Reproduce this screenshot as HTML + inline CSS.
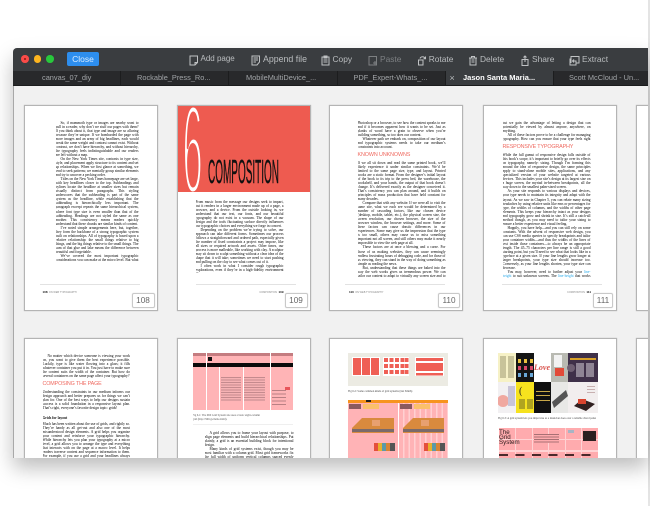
<!DOCTYPE html>
<html style="width:650px;height:506px;overflow:hidden"><head><meta charset="utf-8"><title>PDF Expert</title>
<style>
html,body{margin:0;padding:0;background:#fff}
body{width:650px;height:506px;overflow:hidden;position:relative;font-family:"Liberation Sans",sans-serif}
.strip{position:absolute;left:648px;top:0;width:2px;height:506px;background:linear-gradient(#e4e4e4,#d6d6d6 85%,#e6e6e6)}
.win{position:absolute;left:13px;top:48px;width:635px;height:410px;overflow:hidden;border-radius:4px 0 0 0;background:#f1f1f1;box-shadow:0 10px 20px rgba(0,0,0,.26)}
.win>*{position:absolute}
.tb{left:0;top:0;width:635px;height:23px;background:#3a3d40}
.tabs{left:0;top:23px;width:635px;height:15px;background:#28292b}
.line{left:0;top:37px;width:635px;height:1px;background:#1b1c1d}
.edge{left:0;top:38px;width:1px;height:372px;background:#a8a8a8}
.dot{width:7.5px;height:7.5px;border-radius:50%;top:7.2px}
.close{left:54px;top:4px;width:32px;height:14px;background:#2d8eee;border-radius:2px;color:#d8ecff;font-size:8.5px;line-height:14px;text-align:center}
.t{top:0;height:23px;line-height:22px;font-size:8.4px;color:#babdbf;white-space:nowrap;filter:blur(.25px)}
.ic{top:6.5px;width:10px;height:11px;filter:blur(.2px)}
.ic *{fill:none;stroke:#c0c2c4;stroke-width:1}
.tab{top:23px;height:15px;line-height:14px;font-size:7.4px;color:#a2a5a8;white-space:nowrap;filter:blur(.25px)}
.div{top:23px;height:15px;width:1px;background:#1c1d1e}
.pg{position:absolute;width:132px;height:204px;background:#fff;border:1px solid #b4b4b4;box-shadow:0 0 1px rgba(0,0,0,.25);overflow:hidden}
.in{position:absolute;left:0;top:0;width:132px;height:204px;filter:blur(.3px)}
.tx{position:absolute;font-family:"Liberation Serif",serif;font-size:3.6px;line-height:4.05px;color:#000;text-align:justify;overflow:hidden}
.tx p{margin:0;text-indent:5px}
.h{position:absolute;font-size:5.4px;line-height:6px;color:#ef6a60;white-space:nowrap}
.rule{position:absolute;height:1px;background:#e2e2e2}
.foot{position:absolute;top:185px;font-size:2.5px;line-height:3px;color:#888;white-space:nowrap}
.foot b{color:#111;font-size:3px}
.badge{position:absolute;top:187px;height:13px;line-height:13px;border:1px solid #c9c9c9;border-radius:2px;background:#fff;color:#666;font-size:8.2px;text-align:center;box-shadow:0 0 1px rgba(0,0,0,.2)}
.b{position:absolute}
</style></head><body>
<div class="strip"></div>
<div class="win">
<div class="tb"></div>
<div class="dot" style="left:8.2px;background:#fb4b48"></div>
<div style="left:10.9px;top:9.9px;width:2px;height:2px;border-radius:50%;background:#8c1512"></div>
<div class="dot" style="left:20.7px;background:#fdb51f"></div>
<div class="dot" style="left:33.2px;background:#28c83c"></div>
<div class="close">Close</div>

<svg class="ic" style="left:176px" viewBox="0 0 10 11"><path d="M1 1h7.5v6.5L6 10H1zM6 10V7.5h2.500"/></svg>
<div class="t" style="left:187.500px;font-size:8px">Add page</div>
<svg class="ic" style="left:238px" viewBox="0 0 10 11"><path d="M1 1h7.5v6L6 10H1zM2.500 3h4.500M2.500 5h4.500M2.500 7h2.500"/></svg>
<div class="t" style="left:250px;font-size:8.800px">Append file</div>
<svg class="ic" style="left:307px" viewBox="0 0 10 11"><path d="M2 2h7v8H2zM4 1h3v2H4zM3.500 5h4M3.500 7h4"/></svg>
<div class="t" style="left:319.500px">Copy</div>
<svg class="ic" style="left:355px;opacity:.5" viewBox="0 0 10 11"><path d="M1 1.500h7.500v8.500H1zM5 8h3.500M7 6v4"/></svg>
<div class="t" style="left:367px;color:#7d8083">Paste</div>
<svg class="ic" style="left:404px" viewBox="0 0 10 11"><path d="M1.500 5h4.500v5H1.500zM3 3.500C3.500 1.500 7 1 8 3.500M8.500 1.500v2.300H6.500"/></svg>
<div class="t" style="left:415.700px">Rotate</div>
<svg class="ic" style="left:455px" viewBox="0 0 10 11"><path d="M1 3h8M3.500 3V1.500h3V3M2 3v7h6V3M3.500 5h3M3.500 7h3"/></svg>
<div class="t" style="left:467px">Delete</div>
<svg class="ic" style="left:507px" viewBox="0 0 10 11"><path d="M2 4.500h6V10.500H2zM5 7V1M3.500 2.500L5 1l1.500 1.500"/></svg>
<div class="t" style="left:519px">Share</div>
<svg class="ic" style="left:556px;width:11px" viewBox="0 0 11 11"><path d="M2 8V1.500h8V8H7M1 3.500V10h6V6H3.500M5 4.500L3.500 6 5 7.500"/></svg>
<div class="t" style="left:569px">Extract</div>

<div class="tabs"></div>
<div style="left:432px;top:23px;width:108px;height:14px;background:#3a3d40"></div>
<div class="div" style="left:107px"></div>
<div class="div" style="left:215px"></div>
<div class="div" style="left:324px"></div>
<div class="div" style="left:432px"></div>
<div class="div" style="left:540px"></div>
<div class="tab" style="left:29px">canvas_07_diy</div>
<div class="tab" style="left:124px">Rockable_Press_Ro...</div>
<div class="tab" style="left:233px">MobileMultiDevice_...</div>
<div class="tab" style="left:340.500px">PDF_Expert-Whats_...</div>
<div class="tab" style="left:436.500px;color:#b5b8ba;font-size:9px">×</div>
<div class="tab" style="left:450px;color:#fff;font-weight:bold;font-size:7.500px">Jason Santa Maria...</div>
<div class="tab" style="left:556px;width:75px;overflow:hidden">Scott McCloud - Un...</div>
<div class="line"></div>
<div class="edge"></div>

<!-- Row 1 -->
<div class="pg" style="left:10.500px;top:56.500px"><div class="in">
<div class="tx" style="left:31px;top:15px;width:83px;height:140px">
<p>So, if mammoth type or images are nearby wont to pull in a reader, why don’t we stuff our pages with them? If you think about it, that type and image are so alluring because they’re unique. If we bombarded the page with more images and an army of big headlines, each would break the same weight and contrast cannot exist. Without contrast, we don’t have hierarchy, and without hierarchy, the typography feels indistinguishable and our readers are left without a map.</p>
<p>On the New York Times site, contrasts in type size, style, and placement apply structure to its content and set up relationships. When we first glance at something, we tend to seek patterns; we mentally group similar elements and try to uncover a pecking order.</p>
<p>Titles on the New York Times homepage are set large, with key headlines closer to the top. Subheadings and bylines locate the headline at smaller sizes but remain visually distinct from paragraphs. This styling underscores that the subheading is part of the same system as the headline, while establishing that the subheading is hierarchically less important. The paragraph excerpt repeats the same hierarchical system, where font type size is even smaller than that of the subheading. Headings are not styled the same as one another. This consistency means readers quickly understand that these chunks are similar kinds of content.</p>
<p>I’ve noted simple arrangements here, but, together, they form the backbone of a strong typographic system built on relationships. All of typography is based upon a relative relationship: the small things relative to big things, and the big things relative to the small things. The sum of that glue and lake means the difference between beautiful and forgettable.</p>
<p>We’ve covered the most important typographic considerations you can make at the micro level. But what about the other end of the spectrum: the page? How do larger elements, like the browser window or grid systems, affect our lovingly crafted paragraphs and headlines? Let’s look at the big picture.</p>
</div>
<div class="rule" style="left:15px;top:178px;width:100px"></div>
<div class="foot" style="left:18px"><b>108</b>&nbsp; ON WEB TYPOGRAPHY</div>
<div class="badge" style="right:2px;width:21px">108</div>
</div></div>

<div class="pg" style="left:163.500px;top:56.500px"><div class="in">
<svg class="b" style="left:0;top:0" width="132" height="86" viewBox="0 0 132 86">
<rect width="132" height="86" fill="#ee5b50"/>
<text x="0" y="0" transform="translate(4.500,87) scale(.29,1)" font-family="Liberation Sans" font-size="125" fill="#fff" stroke="#ee5b50" stroke-width="5">6</text>
<text x="30" y="77" font-family="Liberation Sans" font-size="33" fill="#111" stroke="#111" stroke-width=".4" textLength="71" lengthAdjust="spacingAndGlyphs">COMPOSITION</text>
</svg>
<div class="tx" style="left:18px;top:94px;width:88px;height:73px">
<p style="text-indent:0">From music from the message our designs seek to impart, but it renders in a larger environment made up of a page, a browser, and a device. From the outside looking in, we understand that our text, our fonts, and our beautiful typography do not exist in a vacuum. The shape of our design and the tools fluctuating surface directly influences our typographic choices and everything we forge in concert.</p>
<p>Depending on the problem we’re trying to solve, our approach can take different forms. Sometimes our process follows a straightforward and ordered path, especially given the number of fixed constraints a project may impose, like all sizes or required artwork and assets. Other times, our process is more malleable, like working with clay. A sculptor may sit down to sculpt something without a clear idea of the shape that it will take; sometimes we need to start pushing and pulling on the clay to see what comes out of it.</p>
<p>I often work in what I consider rough typographic explorations, even if they’re in a high-fidelity environment like</p>
</div>
<div class="rule" style="left:18px;top:178px;width:100px"></div>
<div class="foot" style="right:26px">COMPOSITION &nbsp;<b>109</b></div>
<div class="badge" style="right:2px;width:21px">109</div>
</div></div>

<div class="pg" style="left:316px;top:56.500px"><div class="in">
<div class="tx" style="left:27.500px;top:15px;width:88px;height:28px">
<p style="text-indent:0">Photoshop or a browser, to see how the content speaks to me and if it becomes apparent how it wants to be set. Just as planks of wood have a grain to observe when you’re building something, so too does our content.</p>
<p>Whatever path we embark on, composition of our layout and typographic systems needs to take our medium’s constraints into account.</p>
</div>
<div class="h" style="left:27.500px;top:46px;letter-spacing:-.1px">KNOWN UNKNOWNS</div>
<div class="tx" style="left:27.500px;top:55px;width:88px;height:117px">
<p style="text-indent:0">If we all sit down and read the same printed book, we’ll likely experience it under similar constraints. We’d be limited to the same page size, type, and layout. Printed books are a static format. From the designer’s initial layout of the book to its trip to the press bed, the warehouse, the bookshelf, and your hands, the output of that book doesn’t change. It’s delivered exactly as the designer conceived it. That’s consistency you can plan around, and it builds on principles of mass production that have held constant for many decades.</p>
<p>Compare that with any website. If we were all to visit the same site, what we each see would be determined by a number of cascading factors, like our chosen device (desktop, mobile, tablet, etc.), the physical screen size, the screen resolution, our chosen browser, the size of the browser window, the browser settings, and more. Some of these factors can cause drastic differences in our experiences. Some may give us the impression that the type is too small, others may cause us to miss something important not all screen, and still others may make it nearly impossible to view the web page at all.</p>
<p>These factors are at once a blessing and a curse. For those of us making websites, they can cause seemingly endless frustrating hours of debugging code, and for those of us viewing, they can stand in the way of doing something as simple as reading the news.</p>
<p>But, understanding that these things are baked into the way the web works gives us tremendous power. We can tailor our content to adapt to virtually any screen size and to look pretty good while doing so. Sure, it’s more difficult to achieve the set precision you get with designing for a physical book I might use,</p>
</div>
<div class="rule" style="left:15px;top:178px;width:100px"></div>
<div class="foot" style="left:19px"><b>110</b>&nbsp; ON WEB TYPOGRAPHY</div>
<div class="badge" style="right:2px;width:20px">110</div>
</div></div>

<div class="pg" style="left:470px;top:56.500px"><div class="in">
<div class="tx" style="left:18.500px;top:15px;width:88px;height:20px">
<p style="text-indent:0">but we gain the advantage of letting a design that can potentially be viewed by almost anyone, anywhere, on anything.</p>
<p>All of these factors prove to be a challenge for managing typography. How can you ensure that your type feels right on any screen?</p>
</div>
<div class="h" style="left:18.500px;top:38.500px;letter-spacing:-.15px">RESPONSIVE TYPOGRAPHY</div>
<div class="tx" style="left:18.500px;top:47.500px;width:88px;height:125px">
<p style="text-indent:0">While the full gamut of responsive design falls outside of this book’s scope, it’s important to briefly go over its effects on typography, namely: sizing. Though I’m framing this around the idea of responsive design, the same principles apply to stand-alone mobile sites, applications, and any specialized version of your website targeted at various devices. This includes your site’s design at its largest size on a huge screen, the myriad in-between breakpoints, all the way down to the smallest palm-sized screen.</p>
<p>As your site responds to various displays and devices, your type needs to maintain its integrity and adapt with the layout. As we saw in Chapter 5, you can relate many sizing headaches by using relative units like ems or percentages for type, the widths of columns, and the widths of other page elements. This keeps your hierarchy intact as your designs and typography grow and shrink in size. It’s still a catch-all method though, as you may need to tailor your sizing to ensure a better experience and visual feeling.</p>
<p>Happily, you have help—and you can still rely on some constants. With the advent of responsive web design, you can use CSS media queries to specify breakpoints and tailor your container widths—and thus the widths of the lines of text inside those containers—to always be an appropriate length. The 45–75 characters per line range is still a good starting point, but you’ll need to see what that looks like in a typeface at a given size. If your line lengths grow longer at larger breakpoints, your type size should increase too. Conversely, as your line lengths shorten, your type size can decrease.</p>
<p>You may, however, need to further adjust your <span style="color:#2aa9e8">line-height</span> to suit unknown screens. The <span style="color:#2aa9e8">line-height</span> that works for body at a display size for your listing may appear too large on a</p>
</div>
<div class="rule" style="left:18px;top:178px;width:100px"></div>
<div class="foot" style="right:25px">COMPOSITION &nbsp;<b>111</b></div>
<div class="badge" style="right:3px;width:18px">111</div>
</div></div>

<div class="pg" style="left:623px;top:56.500px;width:12px;border-right:0"></div>

<!-- Row 2 -->
<div class="pg" style="left:10.500px;top:290px;height:130px"><div class="in" style="height:130px">
<div class="tx" style="left:18px;top:15px;width:87.500px;height:24px">
<p>No matter which device someone is viewing your work on, you want to give them the best experience possible. Luckily, type is like water flowing into a glass; it fills whatever container you put it in. You just have to make sure the content suits the width of the container. But how do several containers on the same page affect your typography?</p>
</div>
<div class="h" style="left:18px;top:41.500px;letter-spacing:-.15px">COMPOSING THE PAGE</div>
<div class="tx" style="left:18px;top:51px;width:87.500px;height:20px">
<p style="text-indent:0">Understanding the constraints in our medium informs our design approach and better prepares us for things we can’t plan for. One of the best ways to help our designs sustain success is a solid foundation in a responsive layout plan. That’s right, everyone’s favorite design topic: grids!</p>
</div>
<div class="tx" style="left:18px;top:77px;width:87.500px;height:5px;font-weight:bold;color:#111">Grids for layout</div>
<div class="tx" style="left:18px;top:83px;width:87.500px;height:40px">
<p style="text-indent:0">Much has been written about the use of grids, and rightly so. They’re handy as all get-out and also one of the most misunderstood design elements. A grid helps you organize your content and reinforce your typographic hierarchy. While hierarchy lets you plan your typography at a micro level, a grid allows you to arrange the type and everything that interacts with on the page at a macro level. It helps readers traverse content and sequence information to them. For example, if you use a grid and your headlines always appear in a certain spot on your images</p>
</div>
</div></div>

<div class="pg" style="left:163.500px;top:290px;height:130px"><div class="in" style="height:130px">
<div class="b" style="left:15px;top:14px;width:100px;height:57px;background:#ffb4b6"></div>
<div class="b" style="left:15px;top:14px;width:100px;height:3px;background:#c47c80"></div>
<div class="b" style="left:15px;top:24px;width:100px;height:4px;background:#0b0b0b"></div>
<div class="b" style="left:28px;top:14px;width:1px;height:57px;background:#fff"></div>
<div class="b" style="left:41px;top:28px;width:1px;height:43px;background:#fff"></div>
<div class="b" style="left:65px;top:28px;width:1px;height:43px;background:#fff"></div>
<div class="b" style="left:92px;top:14px;width:1px;height:57px;background:#fff"></div>
<div class="b" style="left:43px;top:38px;width:20px;height:24px;background:repeating-linear-gradient(#c58a8e 0 1px,#f6b2b4 1px 2.500px)"></div>
<div class="b" style="left:66px;top:38px;width:21px;height:24px;background:repeating-linear-gradient(#c58a8e 0 1px,#f6b2b4 1px 2.500px)"></div>
<div class="b" style="left:94px;top:51px;width:14px;height:17px;background:repeating-linear-gradient(#b98084 0 1px,#ffb4b6 1px 3.500px)"></div>
<div class="b" style="left:30px;top:18px;width:4px;height:4px;background:#111"></div>
<div class="b" style="left:107px;top:48px;width:5px;height:3px;background:#e8545a"></div>
<div class="tx" style="left:15px;top:75px;width:70px;height:9px;font-size:2.800px;line-height:3.600px;color:#555;text-align:left">Fig 6.1: The 960 Grid System site uses a basic eight-column grid (http://960.gs/demo.html).</div>
<div class="rule" style="left:15px;top:85px;width:100px;background:#efefef"></div>
<div class="tx" style="left:27px;top:92px;width:89px;height:27px">
<p>A grid allows you to frame your layout with purpose, to align page elements and build hierarchical relationships. Put plainly, a grid is an essential building block for intentional design.</p>
<p>Many kinds of grid systems exist, though you may be most familiar with a column grid. Most grid frameworks fix the full width of uniform vertical columns spaced evenly across a page. But as you can see in FIG 6.1, that is only one type. Modular grids</p>
</div>
</div></div>

<div class="pg" style="left:316px;top:290px;height:130px"><div class="in" style="height:130px">
<div class="b" style="left:18px;top:14px;width:100px;height:33px;background:#ecebe3"></div>
<div class="b" style="left:22px;top:18px;width:28px;height:19px;background:#fff"></div>
<div class="b" style="left:23px;top:19px;width:8px;height:17px;background:#ef5f55"></div>
<div class="b" style="left:32px;top:19px;width:8px;height:17px;background:#ef5f55"></div>
<div class="b" style="left:41px;top:19px;width:8px;height:17px;background:#ef5f55"></div>
<svg class="b" style="left:53px;top:18px" width="26" height="19"><rect width="26" height="19" fill="#fff"/><g fill="#ef5f55"><rect x="1" y="1" width="4" height="4"/><rect x="6.500" y="1" width="4" height="4"/><rect x="12" y="1" width="4" height="4"/><rect x="17.500" y="1" width="4" height="4"/><rect x="22" y="1" width="3.500" height="4"/><rect x="1" y="7" width="4" height="4"/><rect x="6.500" y="7" width="4" height="4"/><rect x="12" y="7" width="4" height="4"/><rect x="17.500" y="7" width="4" height="4"/><rect x="22" y="7" width="3.500" height="4"/><rect x="1" y="13" width="4" height="4"/><rect x="6.500" y="13" width="4" height="4"/><rect x="12" y="13" width="4" height="4"/><rect x="17.500" y="13" width="4" height="4"/><rect x="22" y="13" width="3.500" height="4"/></g></svg>
<svg class="b" style="left:85px;top:18px" width="29" height="19"><rect width="29" height="19" fill="#fff"/><g fill="#ef5f55"><rect x="1" y="1" width="27" height="3"/><rect x="1" y="6" width="27" height="8"/><rect x="1" y="16" width="27" height="2.500"/></g></svg>
<div class="tx" style="left:18px;top:51px;width:80px;height:4px;font-size:2.800px;line-height:3.600px;color:#444;text-align:left;white-space:nowrap">Fig 6.2: Some common kinds of grid systems (Ian Smith)</div>
<div class="b" style="left:18px;top:61px;width:100px;height:3px;background:#f7941e"></div>
<div class="b" style="left:36px;top:61px;width:5px;height:2px;background:#222"></div>
<div class="b" style="left:18px;top:64px;width:49.500px;height:60px;background:#ffb3b6"></div>
<div class="b" style="left:68.500px;top:64px;width:49.500px;height:60px;background:repeating-linear-gradient(90deg,#ffb3b6 0 4px,#ffd0d2 4px 5.500px)"></div>
<div class="b" style="left:19px;top:65px;width:12px;height:5px;background:#8a5a5e"></div>
<div class="b" style="left:33px;top:65px;width:16px;height:5px;background:#fbc06b"></div>
<div class="b" style="left:70px;top:65px;width:12px;height:5px;background:#8a5a5e"></div>
<div class="b" style="left:84px;top:65px;width:16px;height:5px;background:#fbc06b"></div>
<svg class="b" style="left:22px;top:77px" width="92" height="23"><g fill="#d98a3e"><polygon points="0,12 10,2 42,2 42,17 0,17"/><polygon points="51,12 61,2 92,2 92,17 51,17"/></g><g fill="#7a6a6a"><rect x="0" y="13" width="42" height="3"/><rect x="51" y="13" width="41" height="3"/></g><g fill="#e8a070"><rect x="20" y="4" width="8" height="6"/><rect x="69" y="4" width="8" height="6"/></g></svg>
<svg class="b" style="left:44px;top:104px" width="74" height="10"><g><rect x="0" width="4" height="8" fill="#e4503c"/><rect x="4" width="4" height="8" fill="#e8b02c"/><rect x="8" width="4" height="8" fill="#5b9aa8"/><rect x="12" width="4" height="8" fill="#d88434"/><rect x="16" width="5" height="8" fill="#555"/><rect x="50" width="4" height="8" fill="#e4503c"/><rect x="54" width="4" height="8" fill="#e8b02c"/><rect x="58" width="4" height="8" fill="#5b9aa8"/><rect x="62" width="4" height="8" fill="#d88434"/><rect x="66" width="5" height="8" fill="#555"/></g></svg>
</div></div>

<div class="pg" style="left:470px;top:290px;height:130px"><div class="in" style="height:130px">
<div class="b" style="left:14px;top:14px;width:18px;height:29px;background:#f6f1c6"></div>
<div class="b" style="left:32px;top:14px;width:18px;height:29px;background:#151515"></div>
<div class="b" style="left:50px;top:14px;width:17px;height:29px;background:#fff"></div>
<div class="b" style="left:67px;top:14px;width:17px;height:29px;background:#b9bab2"></div>
<div class="b" style="left:84px;top:14px;width:30px;height:29px;background:#3f3049"></div>
<svg class="b" style="left:14px;top:14px" width="100" height="30" font-family="Liberation Serif"><g fill="#c8c39a"><rect x="2" y="3" width="6" height="22"/><rect x="10" y="3" width="6" height="22"/></g><g fill="#e8c040"><rect x="20" y="6" width="3" height="4"/><rect x="26" y="6" width="3" height="4"/><rect x="32" y="6" width="3" height="4"/></g><g fill="#d84a6a"><rect x="20" y="13" width="3" height="4"/><rect x="26" y="13" width="3" height="4"/><rect x="32" y="13" width="3" height="4"/></g><g fill="#6aa8d8"><rect x="20" y="20" width="3" height="4"/><rect x="26" y="20" width="3" height="4"/><rect x="32" y="20" width="3" height="4"/></g><text x="36" y="17" font-size="8" font-style="italic" fill="#d8504a" font-weight="bold">Love</text><rect x="57" y="15" width="9" height="8" fill="#e24a38"/><rect x="56" y="2" width="8" height="12" fill="#f2f2f2"/><rect x="72" y="5" width="26" height="2" fill="#d8a028"/><g fill="#8e8494"><rect x="78" y="10" width="8" height="14"/><rect x="88" y="10" width="8" height="14"/></g><circle cx="73" cy="15" r="4" fill="#6e5f72"/></svg>
<div class="b" style="left:14px;top:43px;width:18px;height:31px;background:#f2f0f2"></div>
<div class="b" style="left:32px;top:43px;width:18px;height:31px;background:#f6e21e"></div>
<div class="b" style="left:50px;top:43px;width:17px;height:31px;background:#101010"></div>
<div class="b" style="left:67px;top:43px;width:17px;height:31px;background:#e8e8e6"></div>
<div class="b" style="left:84px;top:43px;width:30px;height:31px;background:#f2eeee"></div>
<svg class="b" style="left:14px;top:43px" width="100" height="31"><circle cx="5" cy="19" r="6" fill="#f0a8a0"/><rect x="10" y="4" width="7" height="20" fill="#c8c4d8"/><text x="21" y="12" font-size="10" fill="#222" font-family="Liberation Serif">(</text><g fill="#b0a420"><rect x="21" y="17" width="6" height="10"/><rect x="29" y="17" width="6" height="10"/></g><g fill="#c8a848"><rect x="38" y="9" width="14" height="1"/><rect x="38" y="13" width="14" height="1"/><rect x="38" y="18" width="14" height="1"/></g><polygon points="54,20 68,8 70,14 56,26" fill="#555"/><polygon points="76,24 84,17 97,22 88,29" fill="#302020"/><rect x="80" y="17" width="8" height="5" fill="#d8442e"/><g fill="#c8b0b0"><rect x="89" y="4" width="8" height="1"/><rect x="89" y="7" width="8" height="1"/><rect x="89" y="10" width="8" height="1"/></g></svg>
<div class="tx" style="left:14px;top:78px;width:98px;height:4px;font-size:2.800px;line-height:3.600px;color:#444;text-align:left;white-space:nowrap">Fig 6.3: A grid system lets you improvise as a musician does over a reliable chord pattern.</div>
<div class="b" style="left:15px;top:89px;width:99px;height:35px;background:#ffabae"></div>
<div class="b" style="left:15px;top:100px;width:99px;height:1px;background:#ffd3d4"></div>
<div class="b" style="left:15px;top:111px;width:99px;height:2px;background:#ffd3d4"></div>
<div class="b" style="left:31px;top:89px;width:1px;height:35px;background:#ffd3d4"></div>
<div class="b" style="left:48px;top:89px;width:1px;height:35px;background:#ffd3d4"></div>
<div class="b" style="left:64px;top:89px;width:1px;height:35px;background:#ffd3d4"></div>
<div class="b" style="left:81px;top:89px;width:1px;height:35px;background:#ffd3d4"></div>
<div class="b" style="left:97px;top:89px;width:1px;height:35px;background:#ffd3d4"></div>
<div class="b" style="left:15px;top:91px;font-size:6.200px;line-height:5.200px;color:#2a1a1a">The<br>Grid<br>System</div>
<div class="b" style="left:84px;top:91px;width:6px;height:3px;background:#a8b4c4"></div>
<div class="b" style="left:99px;top:92px;width:13px;height:10px;background:#2c2020"></div>
<div class="b" style="left:50px;top:95px;width:25px;height:9px;background:repeating-linear-gradient(#a87074 0 1px,#ffabae 1px 2.500px)"></div>
<div class="b" style="left:15px;top:115px;width:96px;height:2px;background:repeating-linear-gradient(90deg,#4a2a2c 0 9px,#ffabae 9px 16.500px)"></div>
</div></div>

<div class="pg" style="left:623px;top:290px;width:12px;height:130px;border-right:0"></div>
</div>
</body></html>
